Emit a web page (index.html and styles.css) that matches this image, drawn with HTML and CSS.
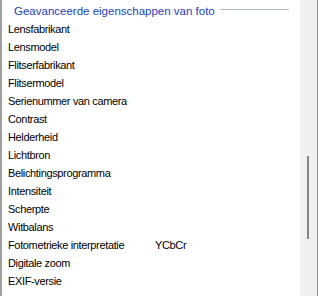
FILE: index.html
```html
<!DOCTYPE html>
<html lang="nl">
<head>
  <meta charset="UTF-8">
  <title>Eigenschappen</title>
  <link rel="stylesheet" href="styles.css">
</head>
<body>

<div id="details">
  <div id="list">
    <div class="group">
      <span class="group-title">Geavanceerde eigenschappen van foto</span>
      <span class="group-line"></span>
    </div>
    <div class="row"><span class="name">Lensfabrikant</span><span class="value"></span></div>
    <div class="row"><span class="name">Lensmodel</span><span class="value"></span></div>
    <div class="row"><span class="name">Flitserfabrikant</span><span class="value"></span></div>
    <div class="row"><span class="name">Flitsermodel</span><span class="value"></span></div>
    <div class="row"><span class="name">Serienummer van camera</span><span class="value"></span></div>
    <div class="row"><span class="name">Contrast</span><span class="value"></span></div>
    <div class="row"><span class="name">Helderheid</span><span class="value"></span></div>
    <div class="row"><span class="name">Lichtbron</span><span class="value"></span></div>
    <div class="row"><span class="name">Belichtingsprogramma</span><span class="value"></span></div>
    <div class="row"><span class="name">Intensiteit</span><span class="value"></span></div>
    <div class="row"><span class="name">Scherpte</span><span class="value"></span></div>
    <div class="row"><span class="name">Witbalans</span><span class="value"></span></div>
    <div class="row"><span class="name">Fotometrieke interpretatie</span><span class="value">YCbCr</span></div>
    <div class="row"><span class="name">Digitale zoom</span><span class="value"></span></div>
    <div class="row"><span class="name">EXIF-versie</span><span class="value"></span></div>
  </div>

  <div id="scrollbar">
    <div class="thumb"></div>
  </div>
</div>

</body>
</html>
```

FILE: styles.css
```css
body {
  margin: 0;
  background: #fff;
  font-family: 'Liberation Sans', Arial, sans-serif;
  font-size: 11px;
  color: #000;
}

#details {
  display: flex;
  width: 318px;
  height: 296px;
  border-left: 2px solid #a0a0a0;
  border-right: 1px solid #8e8ea6;
  box-sizing: border-box;
  overflow: hidden;
}

#list {
  flex: 1;
  padding-top: 2px;
}

.group {
  display: flex;
  align-items: center;
  height: 18px;
  padding-left: 12px;
  padding-right: 11px;
}

.group-title {
  color: #1c3fc4;
  font-size: 11.5px;
  white-space: nowrap;
}

.group-line {
  flex: 1;
  height: 1px;
  margin-left: 5px;
  margin-top: -3px;
  background: #b4bad6;
}

.row {
  display: flex;
  height: 18px;
  line-height: 18px;
  padding-left: 6px;
  white-space: nowrap;
  letter-spacing: -0.35px;
}

.name {
  width: 147px;
}

#scrollbar {
  width: 17px;
  background: #f0f0f0;
  position: relative;
}

.thumb {
  position: absolute;
  left: 7px;
  top: 156px;
  width: 2px;
  height: 83px;
  background: #858585;
}
```
